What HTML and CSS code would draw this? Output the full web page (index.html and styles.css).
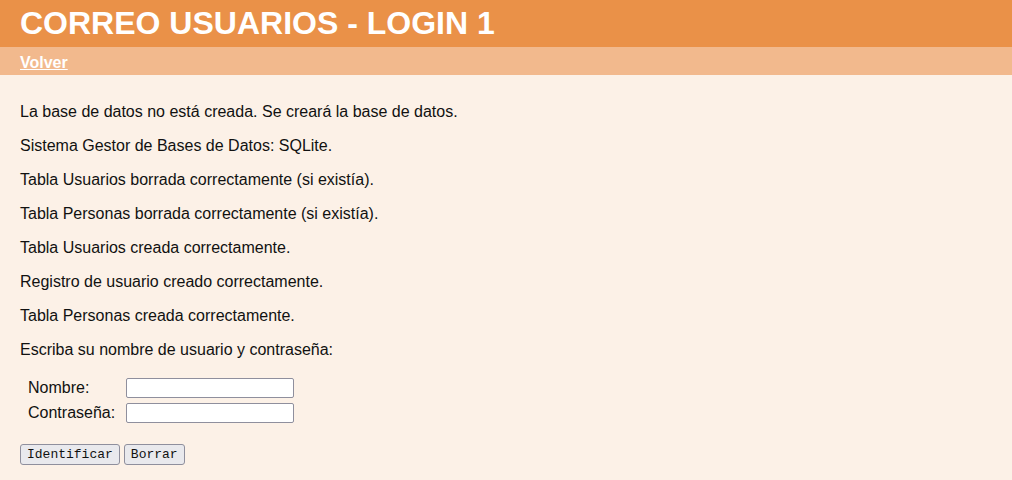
FILE: index.html
```html
<!DOCTYPE html>
<html lang="es">
<head>
    <meta charset="UTF-8">
    <title>Correo usuarios - Login 1</title>
    <link rel="stylesheet" href="styles.css">
</head>
<body>
    <!-- Cabecera -->
    <h1>CORREO USUARIOS - LOGIN 1</h1>

    <nav>
        <a href="index.php">Volver</a>
    </nav>

    <main>
        <p>La base de datos no está creada. Se creará la base de datos.</p>
        <p>Sistema Gestor de Bases de Datos: SQLite.</p>
        <p>Tabla Usuarios borrada correctamente (si existía).</p>
        <p>Tabla Personas borrada correctamente (si existía).</p>
        <p>Tabla Usuarios creada correctamente.</p>
        <p>Registro de usuario creado correctamente.</p>
        <p>Tabla Personas creada correctamente.</p>
        <p>Escriba su nombre de usuario y contraseña:</p>

        <form action="login-2.php" method="get">
            <div class="fields">
                <label for="usuario">Nombre:</label>
                <input type="text" id="usuario" name="usuario">
                <label for="password">Contraseña:</label>
                <input type="password" id="password" name="password">
            </div>
            <div class="buttons">
                <input type="submit" value="Identificar">
                <input type="reset" value="Borrar">
            </div>
        </form>
    </main>
</body>
</html>
```

FILE: styles.css
```css
/* Estilos generales */
body {
    font-family: "Liberation Sans", Arial, sans-serif;
    font-size: 16px;
    margin: 0;
    background-color: #fcf1e7;
    color: #111;
}

h1 {
    margin: 0;
    padding: 0 20px;
    height: 47px;
    line-height: 47px;
    font-size: 32px;
    background-color: #ea9148;
    color: white;
}

nav {
    background-color: #f2b98d;
    padding: 0 20px;
    height: 28px;
    line-height: 31px;
}

nav a {
    color: white;
    font-weight: bold;
}

main {
    padding: 12px 20px 20px;
}

p {
    margin: 16px 0;
}

/* Formulario */
.fields {
    display: grid;
    grid-template-columns: 98px 168px;
    row-gap: 5px;
    padding-left: 8px;
    margin-top: 19px;
    align-items: center;
}

.fields input {
    box-sizing: border-box;
    width: 168px;
    height: 20px;
    border: 1px solid #8f8f9d;
    border-radius: 2px;
    background: white;
}

.buttons {
    margin-top: 21px;
    display: flex;
    gap: 4px;
}

.buttons input {
    font-family: "Liberation Mono", "Courier New", monospace;
    font-size: 13px;
    height: 21px;
    padding: 0 6px;
    border: 1px solid #8f8f9d;
    border-radius: 3px;
    background-color: #e9e9ed;
    color: #111;
}
```
